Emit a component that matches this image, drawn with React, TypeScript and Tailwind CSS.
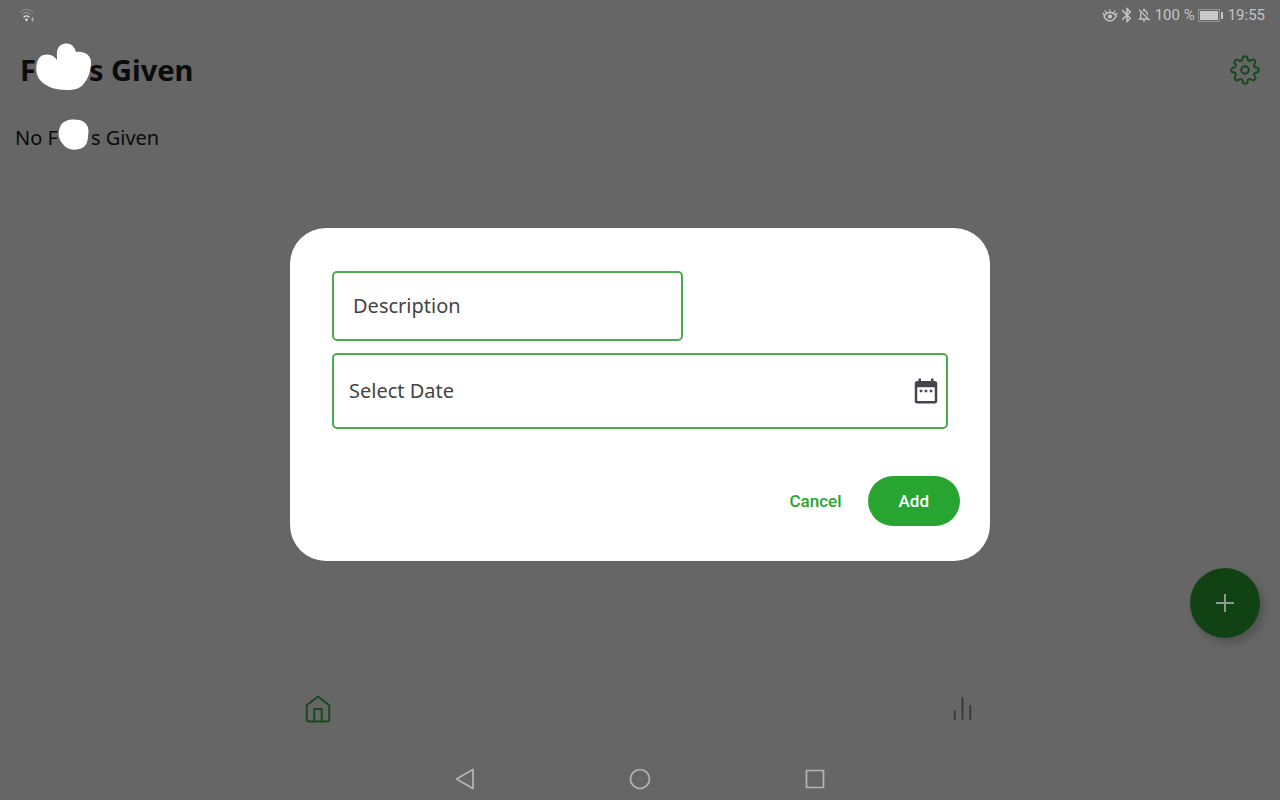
import React, { useState } from 'react';
import { FiBarChart2, FiHome, FiSettings } from 'react-icons/fi';
import { MdBluetooth, MdDateRange, MdOutlineNotificationsOff } from 'react-icons/md';

const WifiIcon = () => (
  <svg width="17" height="14" viewBox="0 0 17 14" fill="none" strokeLinecap="round">
    <path d="M1 4.200C5 .4 10 .4 14 4.200" stroke="#858585" strokeWidth="1.2" />
    <path d="M3.300 6.600C6 3.900 9 3.900 11.700 6.600" stroke="#858585" strokeWidth="1.2" />
    <path d="M5 9C6.500 7.500 8.500 7.500 10 9" stroke="#dcdcdc" strokeWidth="1.500" />
    <circle cx="7.500" cy="11.800" r="1.300" fill="#e8e8e8" />
    <path d="M13.500 10v2.500" stroke="#b4b4b4" strokeWidth="1.700" />
  </svg>
);

const EyeIcon = () => (
  <svg width="16" height="14" viewBox="0 0 16 14" fill="none" stroke="currentColor" strokeWidth="1.500" strokeLinecap="round">
    <path d="M2 8.200C3.500 5.500 5.700 4.500 8 4.500S12.500 5.500 14 8.200C12.500 11.500 10.500 12.800 8 12.800S3.500 11.500 2 8.200z" />
    <path d="M8 1.500v2.500M3 2.800l1.500 2M13 2.800l-1.500 2M.9 5.500l1.400 1.200M15.100 5.500l-1.400 1.200" strokeWidth="1.200" />
    <circle cx="8" cy="8.500" r="2.100" fill="currentColor" stroke="none" />
  </svg>
);

const BatteryIcon = () => (
  <svg width="25" height="13" viewBox="0 0 25 13" fill="none">
    <rect x=".5" y=".5" width="21" height="12" stroke="#929292" />
    <rect x="2" y="2" width="18" height="9" fill="#c9c9c9" />
    <rect x="23" y="3" width="2" height="7" fill="#c4c4c4" />
  </svg>
);

const StatusBar = () => (
  <div className="flex h-[30px] items-center justify-between pl-[19px] pr-[15px] text-[#c4c4c4]">
    <WifiIcon />
    <div className="flex items-center gap-[3px] font-[Roboto,sans-serif] text-[15px]">
      <div className="flex items-center">
        <EyeIcon />
        <MdBluetooth size={18} />
        <MdOutlineNotificationsOff size={16} />
      </div>
      <span>100 %</span>
      <BatteryIcon />
      <span className="ml-[2px]">19:55</span>
    </div>
  </div>
);

const SystemNav = () => (
  <nav className="flex h-[42px] items-center justify-center text-[#b5b5b5]">
    <button aria-label="Back" className="flex w-[175px] justify-center">
      <svg width="22" height="22" viewBox="0 0 22 22" fill="none" stroke="currentColor" strokeWidth="1.7" strokeLinejoin="round">
        <path d="M19 1.500v19L2.500 11z" />
      </svg>
    </button>
    <button aria-label="Home screen" className="flex w-[175px] justify-center">
      <svg width="22" height="22" viewBox="0 0 22 22" fill="none" stroke="currentColor" strokeWidth="1.7">
        <circle cx="11" cy="11" r="9.500" />
      </svg>
    </button>
    <button aria-label="Recent apps" className="flex w-[175px] justify-center">
      <svg width="22" height="22" viewBox="0 0 22 22" fill="none" stroke="currentColor" strokeWidth="1.7" strokeLinejoin="round">
        <rect x="2.500" y="2.500" width="17" height="17" />
      </svg>
    </button>
  </nav>
);

interface AddEntryDialogProps {
  onCancel: () => void;
  onAdd: () => void;
}

const AddEntryDialog: React.FC<AddEntryDialogProps> = ({ onCancel, onAdd }) => {
  const [description, setDescription] = useState('');
  const [date, setDate] = useState('');

  return (
    <div className="fixed inset-0 flex items-center justify-center pb-3">
      <div role="dialog" aria-label="Add entry" className="w-full max-w-[700px] rounded-[36px] bg-white pb-[35px] pt-[43px]">
        <div className="flex flex-col gap-3 px-[42px]">
          <input
            aria-label="Description"
            placeholder="Description"
            value={description}
            onChange={(e) => setDescription(e.target.value)}
            className="h-[70px] w-[351px] max-w-full rounded-[5px] border-2 border-[#4aac50] px-[19px] text-xl text-[#444444] outline-none placeholder:text-[#444444]"
          />
          <div className="flex h-[76px] items-center rounded-[5px] border-2 border-[#4aac50] pl-[15px] pr-[5px]">
            <input
              aria-label="Select Date"
              placeholder="Select Date"
              value={date}
              onChange={(e) => setDate(e.target.value)}
              className="min-w-0 flex-1 text-xl text-[#444444] outline-none placeholder:text-[#444444]"
            />
            <button aria-label="Open calendar" className="text-[#45434b]">
              <MdDateRange size={30} />
            </button>
          </div>
        </div>
        <div className="mt-[47px] flex justify-end gap-[26px] pr-[30px] font-[Roboto,sans-serif] text-[17px] font-medium">
          <button onClick={onCancel} className="pt-[2px] text-[#28a431]">Cancel</button>
          <button onClick={onAdd} className="h-[50px] rounded-full bg-[#28a431] px-[31px] pt-[2px] text-white">Add</button>
        </div>
      </div>
    </div>
  );
};

const App: React.FC = () => {
  const [open, setOpen] = useState(true);

  return (
    <div className="flex min-h-screen flex-col bg-[#666666] font-['Noto_Sans',sans-serif] text-[#0b0b0b]">
      <StatusBar />
      <header className="flex h-20 items-center justify-between px-5">
        <h1 className="relative flex text-[29px] font-bold">
          <span>F</span>
          <span className="ml-[53px]">s Given</span>
          <svg className="absolute left-[14px] top-[-6px]" width="60" height="50" viewBox="0 0 60 50" fill="white">
            <path d="M23 15C22 6 26 2 32 1.500C38 1 41 6 42 10C50 9 57 13 57 20C57 27 55 35 51 40C47 47 40 48 33 48C22 48 12 45 6 38C1 33 1 20 6 15C11 11 19 12 23 18z" />
          </svg>
        </h1>
        <button aria-label="Settings" className="text-[#17491b]">
          <FiSettings size={30} strokeWidth={1.6} />
        </button>
      </header>
      <main className="flex-1 px-[15px] pt-[14px]">
        <p className="relative flex text-xl">
          <span>No F</span>
          <span className="ml-[33px]">s Given</span>
          <svg className="absolute left-[43px] top-[-6px]" width="32" height="34" viewBox="0 0 32 34" fill="white">
            <path d="M8 3C13 1 21 1 26 4C31 8 31 13 30 18C30 25 27 30 21 31C14 33 8 31 4 25C0 20 0 14 2 9C3 6 5 4 8 3z" />
          </svg>
        </p>
      </main>
      <div className="flex justify-end pb-[21px] pr-5">
        <button
          aria-label="Add"
          onClick={() => setOpen(true)}
          className="flex size-[70px] items-center justify-center rounded-full bg-[#104213] text-[#8f9a8f] shadow-[4px_5px_8px_rgba(0,0,0,0.2)]"
        >
          <svg width="18" height="18" viewBox="0 0 18 18" stroke="currentColor" strokeWidth="2">
            <path d="M9 0v18M0 9h18" />
          </svg>
        </button>
      </div>
      <nav className="grid h-[99px] grid-cols-2 items-center justify-items-center gap-[10px]">
        <button aria-label="Home" className="text-[#17491b]">
          <FiHome size={30} strokeWidth={1.600} />
        </button>
        <button aria-label="Statistics" className="text-[#3a3a3a]">
          <FiBarChart2 size={31} strokeWidth={1.500} />
        </button>
      </nav>
      <SystemNav />
      {open && <AddEntryDialog onCancel={() => setOpen(false)} onAdd={() => setOpen(false)} />}
    </div>
  );
};

export default App;
